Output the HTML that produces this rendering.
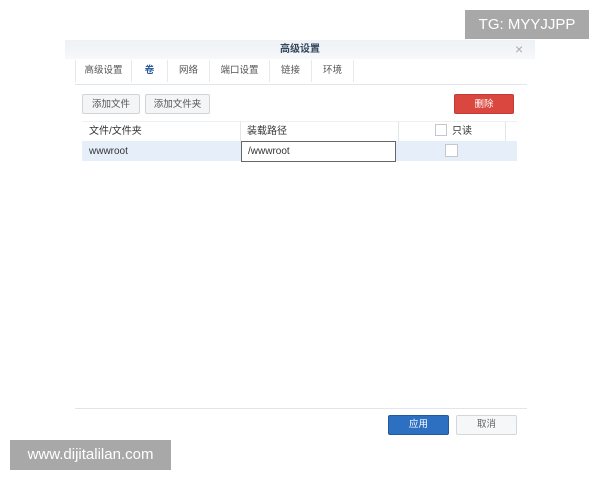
<!DOCTYPE html>
<html><head><meta charset="utf-8"><style>
*{margin:0;padding:0;box-sizing:border-box}
body{width:600px;height:480px;background:#fff;position:relative;font-family:"Liberation Sans","Noto Sans CJK SC",sans-serif;font-size:10px;color:#333;overflow:hidden}
.a{position:absolute}
.hdr{left:65px;top:40px;width:470px;height:19px;background:linear-gradient(#eef1f5,#f6f8fa);text-align:center;font-size:10px;font-weight:bold;line-height:19px;color:#33475d}
.tab{top:60px;height:22px;line-height:22px;font-size:9.5px;color:#555;border-right:1px solid #e6e8ea;text-align:center}
.btn{top:94px;height:20px;line-height:19px;border:1px solid #cfd4d9;background:#f3f5f7;border-radius:2px;text-align:center;font-size:9.5px;color:#555}
.cb{width:12px;height:12px;border:1px solid #c4c8cc;background:#fff}
</style></head><body>
<div class="a hdr">高级设置</div>
<div class="a" style="left:515px;top:40px;font-size:14px;color:#aaa;line-height:19px">×</div>
<div class="a" style="left:75px;top:60px;width:1px;height:22px;background:#e6e8ea"></div>
<div class="a tab" style="left:76px;width:56px">高级设置</div>
<div class="a tab" style="left:132px;width:36px;color:#2a5d9a;font-weight:bold">卷</div>
<div class="a tab" style="left:168px;width:42px">网络</div>
<div class="a tab" style="left:210px;width:60px">端口设置</div>
<div class="a tab" style="left:270px;width:42px">链接</div>
<div class="a tab" style="left:312px;width:42px">环境</div>
<div class="a" style="left:75px;top:84px;width:452px;height:1px;background:#e3e6e9"></div>
<div class="a btn" style="left:82px;width:58px">添加文件</div>
<div class="a btn" style="left:145px;width:65px">添加文件夹</div>
<div class="a btn" style="left:454px;width:60px;background:#d9473f;border-color:#c23a33;color:#fff">删除</div>
<div class="a" style="left:82px;top:121px;width:435px;height:1px;background:#eef0f2"></div>
<div class="a" style="left:89px;top:122px;line-height:19px">文件/文件夹</div>
<div class="a" style="left:240px;top:122px;width:1px;height:19px;background:#e3e6e9"></div>
<div class="a" style="left:247px;top:122px;line-height:19px">装载路径</div>
<div class="a" style="left:398px;top:122px;width:1px;height:19px;background:#e3e6e9"></div>
<div class="a cb" style="left:435px;top:124px"></div>
<div class="a" style="left:452px;top:122px;line-height:19px">只读</div>
<div class="a" style="left:505px;top:122px;width:1px;height:19px;background:#e3e6e9"></div>
<div class="a" style="left:82px;top:141px;width:435px;height:20px;background:#e6eef9"></div>
<div class="a" style="left:89px;top:143px;line-height:18px;font-size:10px">wwwroot</div>
<div class="a" style="left:241px;top:141px;width:155px;height:21px;border:1px solid #666;background:#fff;padding-left:6px;line-height:19px">/wwwroot</div>
<div class="a cb" style="left:445px;top:144px;width:13px;height:13px"></div>
<div class="a" style="left:75px;top:408px;width:452px;height:1px;background:#e3e6e9"></div>
<div class="a" style="left:388px;top:415px;width:61px;height:20px;background:#2d6fc0;border:1px solid #225a9e;border-radius:2px;color:#fff;text-align:center;line-height:18px;font-size:9.5px">应用</div>
<div class="a" style="left:456px;top:415px;width:61px;height:20px;background:#f6f7f8;border:1px solid #d4d7da;border-radius:2px;color:#666;text-align:center;line-height:18px;font-size:9.5px">取消</div>
<div class="a" style="left:465px;top:10px;width:124px;height:29px;background:#a8a8a8;color:#fff;font-size:15px;line-height:29px;text-align:center">TG: MYYJJPP</div>
<div class="a" style="left:10px;top:440px;width:161px;height:30px;background:#a8a8a8;color:#fff;font-size:15px;line-height:30px;text-align:center">www.dijitalilan.com</div>
</body></html>
